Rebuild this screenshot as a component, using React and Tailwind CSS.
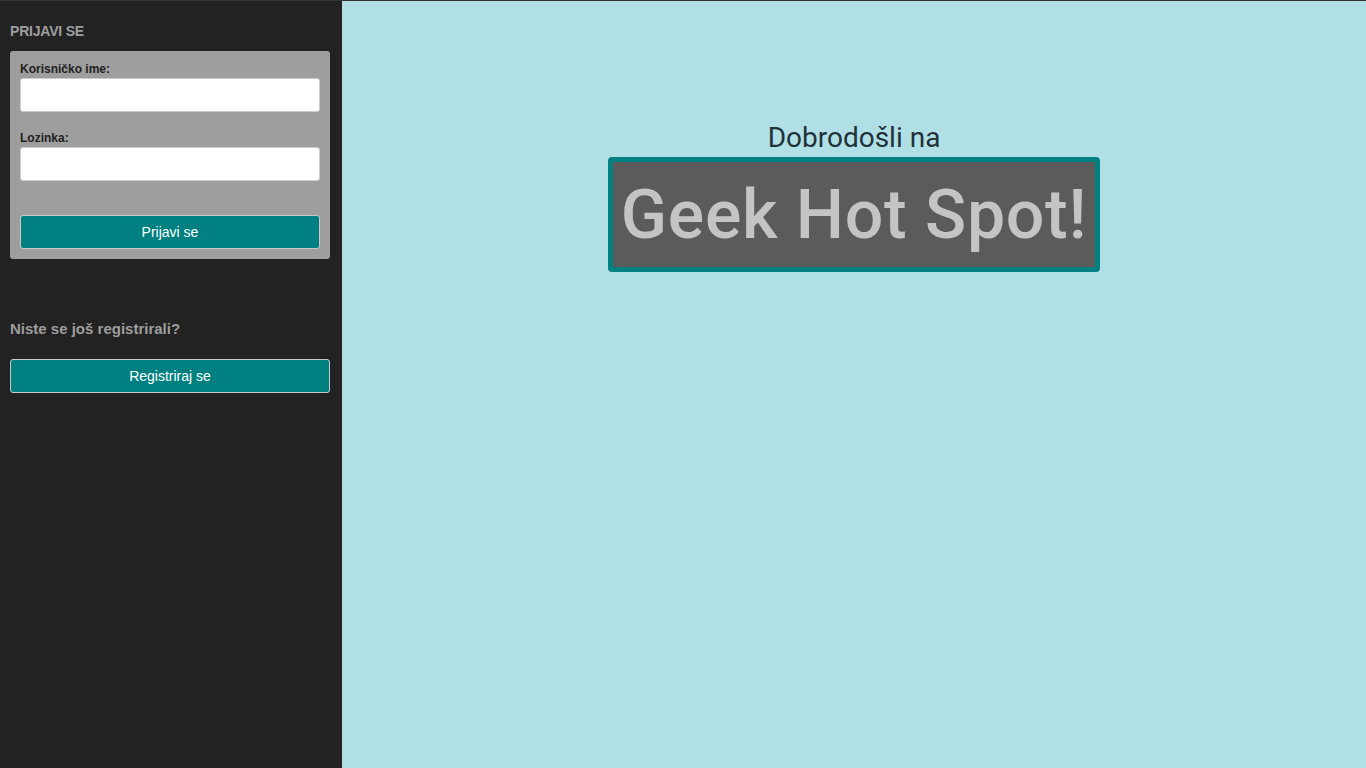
const Field = ({ label, mt }) => (
  <div className={mt}>
    <label className="block text-[12px] font-bold text-[#222] leading-[14px] mb-[2px]">{label}</label>
    <input
      type="text"
      className="block w-full h-[34px] bg-white rounded-[3px] border border-[#ccc] px-2 outline-none"
    />
  </div>
);

const Sidebar = () => {
  return (
    <aside className="w-[342px] shrink-0 bg-[#222222] pl-[10px] pr-[12px] pt-[22px]">
      <h3 className="text-[14px] font-bold text-[#9e9e9e] leading-[17px] tracking-[-0.2px]">PRIJAVI SE</h3>

      <form className="mt-[11px] bg-[#9e9e9e] rounded-[3px] px-[10px] pt-[11px] pb-[10px]">
        <Field label="Korisničko ime:" />
        <Field label="Lozinka:" mt="mt-[19px]" />
        <button
          type="button"
          className="mt-[34px] w-full h-[34px] bg-[#008080] border border-[#c8c8c8] rounded-[3px] text-white text-[14px]"
        >
          Prijavi se
        </button>
      </form>

      <p className="mt-[61px] text-[15px] font-bold text-[#9e9e9e] leading-[18px]">Niste se još registrirali?</p>
      <button
        type="button"
        className="mt-[21px] w-full h-[34px] bg-[#008080] border border-[#c8c8c8] rounded-[3px] text-white text-[14px]"
      >
        Registriraj se
      </button>
    </aside>
  );
};

export default function App() {
  return (
    <div className="flex h-[768px] w-full border-t border-[#333] font-['Liberation_Sans',Arial,sans-serif] overflow-hidden">
      <Sidebar />
      <main className="flex-1 bg-[#b0e0e6] flex flex-col items-center pt-[119px]">
        <h1 className="font-['Roboto',sans-serif] text-[28px] leading-[36px] text-[#223238]">Dobrodošli na</h1>
        <div className="mt-[1px] w-[492px] h-[115px] bg-[#5b5b5b] border-[5px] border-[#008080] rounded-[4px] flex items-center justify-center">
          <span className="font-['Roboto',sans-serif] font-medium text-[68px] leading-none text-[#c4c4c4] tracking-[0.7px]">Geek Hot Spot!</span>
        </div>
      </main>
    </div>
  );
}
